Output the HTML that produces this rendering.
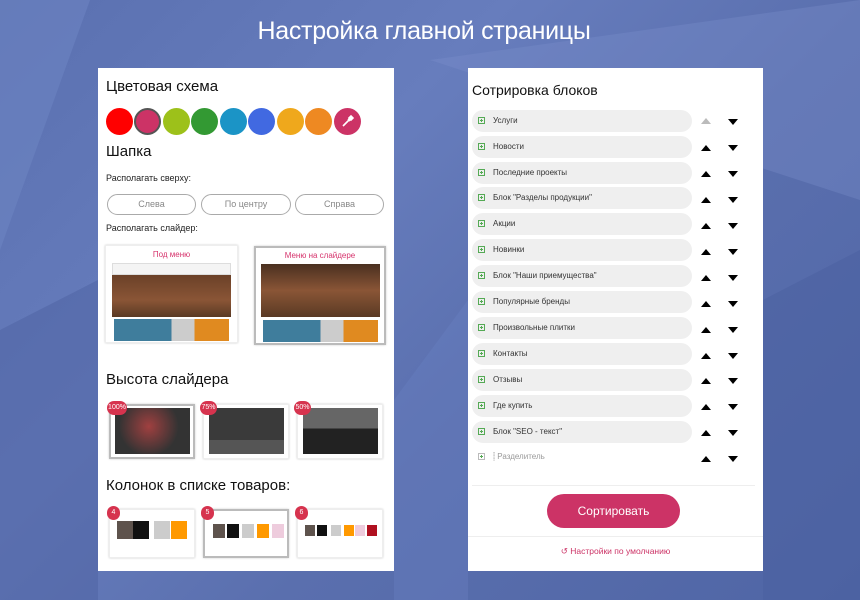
<!DOCTYPE html>
<html><head><meta charset="utf-8">
<style>
*{margin:0;padding:0;box-sizing:border-box}
body{width:860px;height:600px;overflow:hidden;position:relative;font-family:"Liberation Sans","DejaVu Sans",sans-serif;
background:linear-gradient(135deg,#5a70b0 0%,#677dbd 35%,#5a6fae 60%,#4f65a5 100%);}
.a{position:absolute}
h1{position:absolute;left:0;width:848px;top:17px;text-align:center;color:#fff;font-weight:normal;font-size:25px;letter-spacing:-0.3px}
.panel{position:absolute;background:#fff}
.h{position:absolute;font-size:15px;color:#111}
.s{position:absolute;font-size:9px;color:#222}
.c{position:absolute;top:108px;width:27px;height:27px;border-radius:50%}
.btn{position:absolute;top:194px;height:21px;border:1px solid #aaa;border-radius:11px;font-size:9px;color:#888;text-align:center;line-height:19px}
.card{position:absolute;background:#fff;box-shadow:0 0 2px #ccc;border:1px solid #eee}
.sel{border:2px solid #bbb}
.img{position:absolute}
.badge{position:absolute;background:#d6334e;color:#fff;font-size:7px;border-radius:8px;height:14px;line-height:14px;text-align:center}
.row{position:absolute;left:472px;width:220px;height:22px;background:#efefef;border-radius:11px;font-size:8px;color:#333;line-height:22px;padding-left:21px}
.row i{position:absolute;left:6px;top:7px;width:7px;height:7px;border:1px solid #5a5;font-style:normal}
.row i:before{content:"";position:absolute;left:1px;top:2px;width:3px;height:1px;background:#5a5}
.row i:after{content:"";position:absolute;left:2px;top:1px;width:1px;height:3px;background:#5a5}
.up{position:absolute;width:0;height:0;border-left:5px solid transparent;border-right:5px solid transparent;border-bottom:6px solid #000}
.dn{position:absolute;width:0;height:0;border-left:5px solid transparent;border-right:5px solid transparent;border-top:6px solid #000}
.tee{position:absolute;width:16px;height:18px}
</style></head><body>
<svg class="a" style="left:0;top:0" width="860" height="600">
<polygon points="0,0 90,0 0,250" fill="#6d83c2" opacity=".6"/>
<polygon points="430,60 860,0 860,200" fill="#7a8fcb" opacity=".35"/>
<polygon points="0,330 98,280 98,600 0,600" fill="#4d62a2" opacity=".5"/>
<polygon points="763,300 860,250 860,600 763,600" fill="#4a5f9f" opacity=".5"/>
<polygon points="394,400 468,300 468,600 394,600" fill="#6a80c0" opacity=".4"/>
</svg>
<h1>Настройка главной страницы</h1>

<div class="panel" style="left:98px;top:68px;width:296px;height:503px"></div>
<div class="h" style="left:106px;top:78px">Цветовая схема</div>
<div class="c" style="left:106px;background:#ff0000"></div>
<div class="c" style="left:134px;background:#cc3366;border:2px solid #555"></div>
<div class="c" style="left:163px;background:#9dc11a"></div>
<div class="c" style="left:191px;background:#339933"></div>
<div class="c" style="left:220px;background:#1b94c6"></div>
<div class="c" style="left:248px;background:#4169e1"></div>
<div class="c" style="left:277px;background:#efa81c"></div>
<div class="c" style="left:305px;background:#ee8922"></div>
<div class="c" style="left:334px;background:#cc3366"></div>
<svg class="a" style="left:341px;top:115px" width="13" height="13" viewBox="0 0 13 13"><path d="M2 11 L8 5 M7 4 L9 6 M8 3 L10 1 L12 3 L10 5Z" stroke="#fff" stroke-width="1.6" fill="#fff"/></svg>

<div class="h" style="left:106px;top:143px">Шапка</div>
<div class="s" style="left:106px;top:173px">Располагать сверху:</div>
<div class="btn" style="left:107px;width:89px">Слева</div>
<div class="btn" style="left:201px;width:90px">По центру</div>
<div class="btn" style="left:295px;width:89px">Справа</div>
<div class="s" style="left:106px;top:223px">Располагать слайдер:</div>

<div class="card" style="left:105px;top:245px;width:133px;height:98px"></div>
<div class="a" style="left:105px;top:250px;width:133px;text-align:center;font-size:8px;color:#d6336c">Под меню</div>
<div class="img" style="left:112px;top:263px;width:119px;height:12px;background:#f4f4f4;border:1px solid #ddd"></div>
<div class="img" style="left:112px;top:275px;width:119px;height:42px;background:linear-gradient(180deg,#6b4128,#8a5536 60%,#5a3a24)"></div>
<div class="img" style="left:114px;top:319px;width:115px;height:22px;background:linear-gradient(90deg,#3f7d9c 0 50%,#ccc 50% 70%,#e08a20 70%)"></div>

<div class="card sel" style="left:254px;top:246px;width:132px;height:99px"></div>
<div class="a" style="left:254px;top:251px;width:132px;text-align:center;font-size:8px;color:#d6336c">Меню на слайдере</div>
<div class="img" style="left:261px;top:264px;width:119px;height:53px;background:linear-gradient(180deg,#4a3020,#8a5536 50%,#5a3a24)"></div>
<div class="img" style="left:263px;top:320px;width:115px;height:22px;background:linear-gradient(90deg,#3f7d9c 0 50%,#ccc 50% 70%,#e08a20 70%)"></div>

<div class="h" style="left:106px;top:371px">Высота слайдера</div>
<div class="card sel" style="left:109px;top:404px;width:86px;height:55px"></div>
<div class="img" style="left:115px;top:408px;width:75px;height:46px;background:radial-gradient(circle at 45% 40%,#a04040,#333 60%)"></div>
<div class="card" style="left:203px;top:404px;width:86px;height:55px"></div>
<div class="img" style="left:209px;top:408px;width:75px;height:46px;background:linear-gradient(180deg,#3a3a3a 0 70%,#555 70%)"></div>
<div class="card" style="left:297px;top:404px;width:86px;height:55px"></div>
<div class="img" style="left:303px;top:408px;width:75px;height:46px;background:linear-gradient(180deg,#666 0 45%,#222 45%)"></div>
<div class="badge" style="left:107px;top:401px;width:20px">100%</div>
<div class="badge" style="left:200px;top:401px;width:17px">75%</div>
<div class="badge" style="left:294px;top:401px;width:17px">50%</div>

<div class="h" style="left:106px;top:477px">Колонок в списке товаров:</div>
<div class="card" style="left:109px;top:509px;width:86px;height:49px"></div>
<div class="card sel" style="left:203px;top:509px;width:86px;height:49px"></div>
<div class="card" style="left:297px;top:509px;width:86px;height:49px"></div>
<div class="tee" style="left:117px;top:521px;background:#5e534d"></div>
<div class="tee" style="left:133px;top:521px;background:#111"></div>
<div class="tee" style="left:154px;top:521px;background:#ccc"></div>
<div class="tee" style="left:171px;top:521px;background:#f90"></div>
<div class="tee" style="left:213px;top:524px;width:12px;height:14px;background:#5e534d"></div>
<div class="tee" style="left:227px;top:524px;width:12px;height:14px;background:#111"></div>
<div class="tee" style="left:242px;top:524px;width:12px;height:14px;background:#ccc"></div>
<div class="tee" style="left:257px;top:524px;width:12px;height:14px;background:#f90"></div>
<div class="tee" style="left:272px;top:524px;width:12px;height:14px;background:#ecd"></div>
<div class="tee" style="left:305px;top:525px;width:10px;height:11px;background:#5e534d"></div>
<div class="tee" style="left:317px;top:525px;width:10px;height:11px;background:#111"></div>
<div class="tee" style="left:331px;top:525px;width:10px;height:11px;background:#ccc"></div>
<div class="tee" style="left:344px;top:525px;width:10px;height:11px;background:#f90"></div>
<div class="tee" style="left:355px;top:525px;width:10px;height:11px;background:#ecd"></div>
<div class="tee" style="left:367px;top:525px;width:10px;height:11px;background:#b01020"></div>
<div class="badge" style="left:107px;top:506px;width:13px">4</div>
<div class="badge" style="left:201px;top:506px;width:13px">5</div>
<div class="badge" style="left:295px;top:506px;width:13px">6</div>

<div class="panel" style="left:468px;top:68px;width:295px;height:503px"></div>
<div class="h" style="left:472px;top:82px;font-size:14px">Сотрировка блоков</div>

<div class="row" style="top:110px"><i></i>Услуги</div>
<div class="row" style="top:136px"><i></i>Новости</div>
<div class="row" style="top:162px"><i></i>Последние проекты</div>
<div class="row" style="top:187px"><i></i>Блок "Разделы продукции"</div>
<div class="row" style="top:213px"><i></i>Акции</div>
<div class="row" style="top:239px"><i></i>Новинки</div>
<div class="row" style="top:265px"><i></i>Блок "Наши приемущества"</div>
<div class="row" style="top:291px"><i></i>Популярные бренды</div>
<div class="row" style="top:317px"><i></i>Произвольные плитки</div>
<div class="row" style="top:343px"><i></i>Контакты</div>
<div class="row" style="top:369px"><i></i>Отзывы</div>
<div class="row" style="top:395px"><i></i>Где купить</div>
<div class="row" style="top:421px"><i></i>Блок "SEO - текст"</div>
<div class="row" style="top:446px;background:none;color:#999"><i style="border-color:#bbb"></i>⸽ Разделитель</div>

<div class="up" style="left:701px;top:118px;border-bottom-color:#bbb"></div>
<div class="dn" style="left:728px;top:119px"></div>
<div class="up" style="left:701px;top:145px"></div><div class="dn" style="left:728px;top:145px"></div>
<div class="up" style="left:701px;top:171px"></div><div class="dn" style="left:728px;top:171px"></div>
<div class="up" style="left:701px;top:197px"></div><div class="dn" style="left:728px;top:197px"></div>
<div class="up" style="left:701px;top:223px"></div><div class="dn" style="left:728px;top:223px"></div>
<div class="up" style="left:701px;top:249px"></div><div class="dn" style="left:728px;top:249px"></div>
<div class="up" style="left:701px;top:275px"></div><div class="dn" style="left:728px;top:275px"></div>
<div class="up" style="left:701px;top:301px"></div><div class="dn" style="left:728px;top:301px"></div>
<div class="up" style="left:701px;top:327px"></div><div class="dn" style="left:728px;top:327px"></div>
<div class="up" style="left:701px;top:353px"></div><div class="dn" style="left:728px;top:353px"></div>
<div class="up" style="left:701px;top:378px"></div><div class="dn" style="left:728px;top:378px"></div>
<div class="up" style="left:701px;top:404px"></div><div class="dn" style="left:728px;top:404px"></div>
<div class="up" style="left:701px;top:430px"></div><div class="dn" style="left:728px;top:430px"></div>
<div class="up" style="left:701px;top:456px"></div><div class="dn" style="left:728px;top:456px"></div>

<div class="a" style="left:472px;top:485px;width:283px;height:1px;background:#eee"></div>
<div class="a" style="left:547px;top:494px;width:133px;height:34px;background:#cc3366;border-radius:17px;color:#fff;font-size:12px;text-align:center;line-height:34px">Сортировать</div>
<div class="a" style="left:468px;top:536px;width:295px;height:1px;background:#eee"></div>
<div class="a" style="left:468px;top:546px;width:295px;text-align:center;font-size:8.5px;color:#cc3366">↺ Настройки по умолчанию</div>
</body></html>
